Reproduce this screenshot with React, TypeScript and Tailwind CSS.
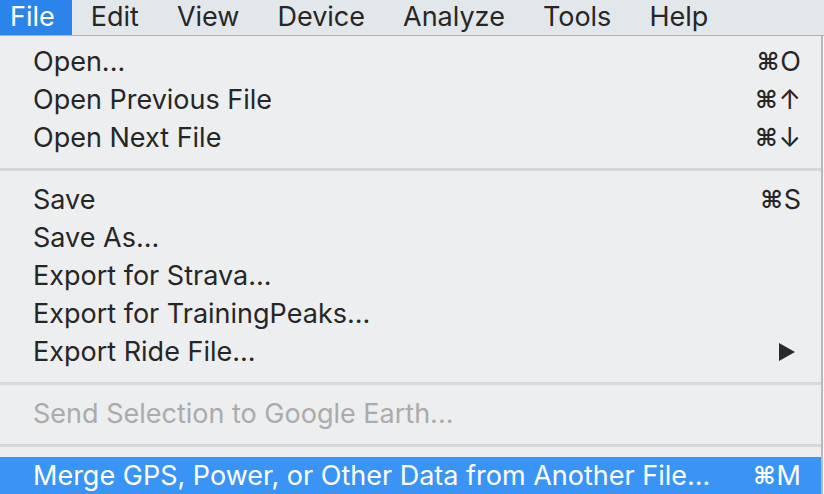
import type { ReactNode } from "react";

type Entry =
  | { kind: "item"; label: string; shortcut?: ReactNode; submenu?: boolean; disabled?: boolean; active?: boolean }
  | { kind: "sep" };

const MENUS = ["File", "Edit", "View", "Device", "Analyze", "Tools", "Help"];

const Cmd = ({ k }: { k: string }) => (
  <span className="flex items-center">
    <span className="font-['DejaVu_Sans'] font-bold text-[24px] mr-[1px]">⌘</span>
    <span>{k}</span>
  </span>
);

const ENTRIES: Entry[] = [
  { kind: "item", label: "Open...", shortcut: <Cmd k="O" /> },
  { kind: "item", label: "Open Previous File", shortcut: <Cmd k="↑" /> },
  { kind: "item", label: "Open Next File", shortcut: <Cmd k="↓" /> },
  { kind: "sep" },
  { kind: "item", label: "Save", shortcut: <Cmd k="S" /> },
  { kind: "item", label: "Save As..." },
  { kind: "item", label: "Export for Strava..." },
  { kind: "item", label: "Export for TrainingPeaks..." },
  { kind: "item", label: "Export Ride File...", submenu: true },
  { kind: "sep" },
  { kind: "item", label: "Send Selection to Google Earth...", disabled: true },
  { kind: "sep" },
  { kind: "item", label: "Merge GPS, Power, or Other Data from Another File...", shortcut: <Cmd k="M" />, active: true },
];

const MenuRow = ({ entry }: { entry: Entry }) => {
  if (entry.kind === "sep") {
    return (
      <div className="h-[24px] flex items-center">
        <div className="h-[3px] w-full bg-[#d6d8da]" />
      </div>
    );
  }
  const color = entry.active ? "text-white bg-[#3a94f6]" : entry.disabled ? "text-[#ababab]" : "text-[#262626]";
  return (
    <div className={`h-[38px] flex items-center justify-between pl-[33px] pr-[20px] ${color}`}>
      <span>{entry.label}</span>
      {entry.shortcut}
      {entry.submenu && (
        <svg width="18" height="20" viewBox="0 0 18 20" className="mr-[5px]">
          <path d="M1 1 L17 10 L1 19 Z" fill="#2a2a2a" />
        </svg>
      )}
    </div>
  );
};

export default function App() {
  return (
    <div className="w-[824px] h-[494px] overflow-hidden bg-[#f4f5f6] font-['Inter',sans-serif]">
      <div className="h-[36px] flex bg-[#e2e7ec] border-b border-[#b0b3b6] text-[27px] leading-none text-[#262626]">
        {MENUS.map((m, i) => (
          <div
            key={m}
            className={
              i === 0
                ? "h-full flex items-center pb-[3px] pl-[10px] pr-[17px] bg-[#2a84ea] text-white"
                : "h-full flex items-center pb-[3px] px-[19px]"
            }
          >
            {m}
          </div>
        ))}
      </div>
      <div className="w-[823px] pt-[7px] bg-[#eceef0] border-r-2 border-[#b8b9ba] text-[27px]">
        {ENTRIES.map((e, i) => (
          <MenuRow key={i} entry={e} />
        ))}
      </div>
    </div>
  );
}
